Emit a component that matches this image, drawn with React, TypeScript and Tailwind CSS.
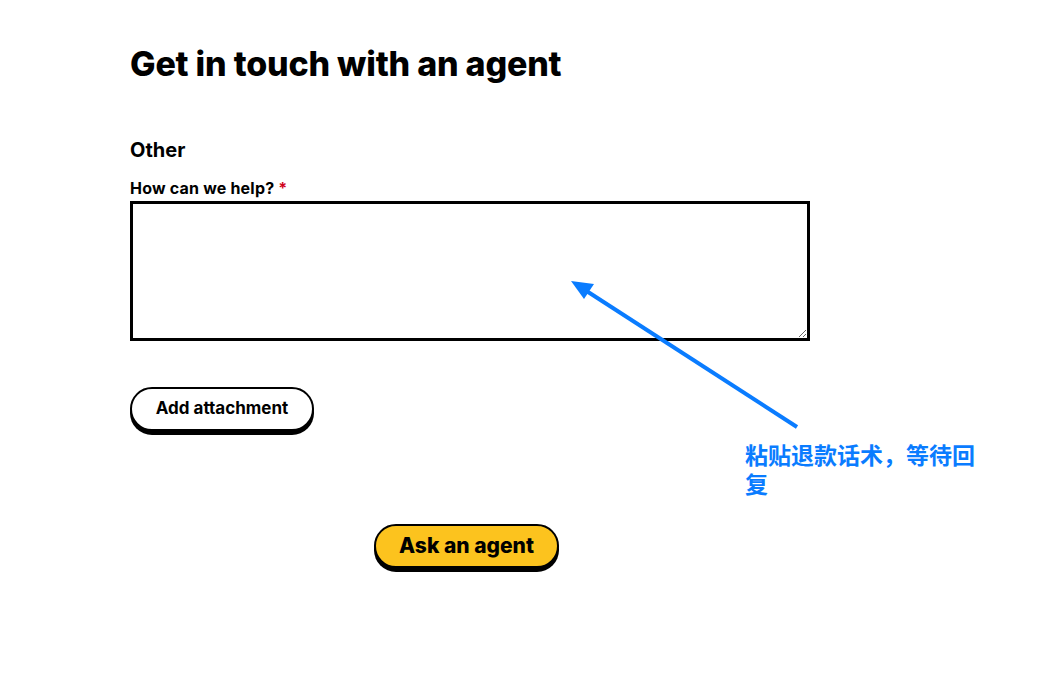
export default function App() {
  return (
    <div
      className="relative min-h-[674px] w-[1043px] bg-white text-black"
      style={{ fontFamily: 'Inter, "Liberation Sans", sans-serif' }}
    >
      <div className="w-[680px] ml-[130px] pt-[43px]">
        <h1 className="text-[34px] font-extrabold leading-[42px] tracking-[-0.2px]">
          Get in touch with an agent
        </h1>

        <h2 className="mt-[51px] text-[20px] font-bold leading-[28px]">Other</h2>

        <label className="mt-[13px] block text-[16px] font-bold leading-[22px] tracking-[0.2px]">
          How can we help? <span className="text-[#d0021b]">*</span>
        </label>
        <textarea className="mt-[2px] block w-full h-[140px] border-[3px] border-black bg-white outline-none" />

        <button className="mt-[46px] h-[44px] w-[184px] rounded-full border-2 border-black bg-white text-[17px] font-bold shadow-[0_4px_0_#000]">
          Add attachment
        </button>

        <button className="mt-[93px] ml-[244px] block h-[44px] w-[185px] rounded-full border-2 border-black bg-[#fcc31e] text-[21px] font-extrabold shadow-[0_4px_0_#000]">
          Ask an agent
        </button>
      </div>

      <svg className="absolute left-0 top-0 pointer-events-none" width="1043" height="674">
        <line x1="797" y1="427" x2="585" y2="290" stroke="#0a7cff" strokeWidth="4" />
        <polygon points="571,281 594,284 584,299" fill="#0a7cff" />
      </svg>
      <div
        className="absolute left-[745px] top-[440px] w-[236px] text-[23px] font-bold leading-[29px] text-[#0a7cff]"
        style={{ fontFamily: '"Noto Sans CJK SC", sans-serif' }}
      >
        粘贴退款话术，等待回复
      </div>
    </div>
  );
}
